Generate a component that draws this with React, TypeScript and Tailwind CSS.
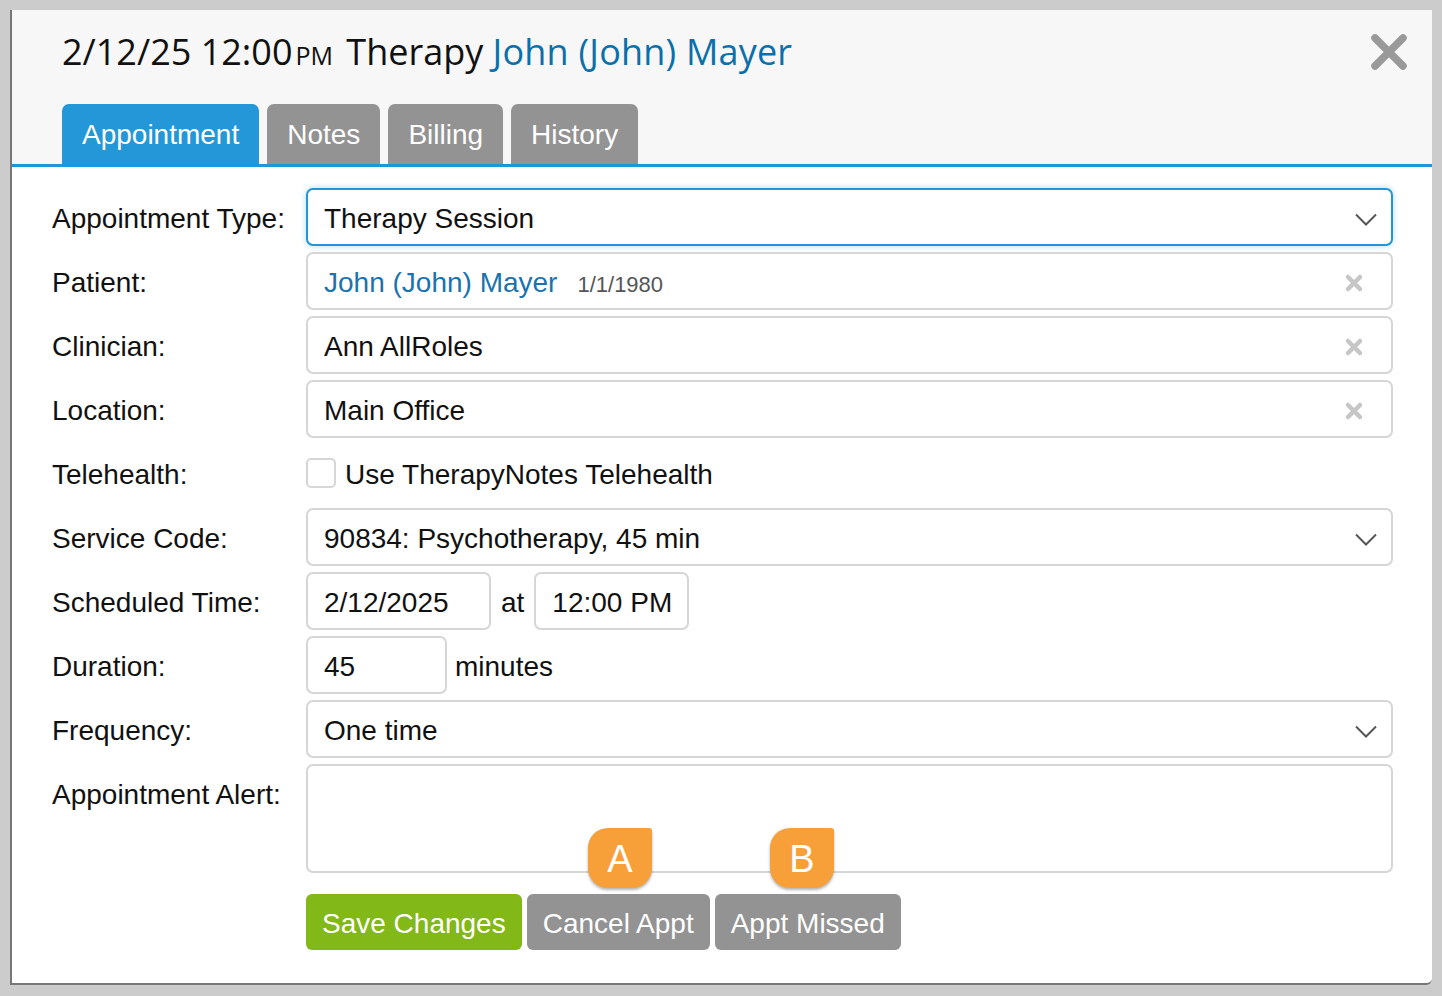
import React from 'react';

const ClearIcon = () => (
  <svg width="20" height="20" viewBox="0 0 20 20" className="shrink-0">
    <path
      d="M4 4L16 16M16 4L4 16"
      stroke="#c6c6c6"
      strokeWidth="4.5"
      strokeLinecap="round"
    />
  </svg>
);

const Chevron = () => (
  <svg width="22" height="13" viewBox="0 0 22 13" className="shrink-0">
    <path d="M1 1.5l10 10 10-10" fill="none" stroke="#555" strokeWidth="2" />
  </svg>
);

const Label = ({ children }: { children: React.ReactNode }) => (
  <div className="w-[254px] shrink-0 pt-[4px] text-[28px] text-[#111]">{children}</div>
);

const Row = ({ label, children }: { label: string; children: React.ReactNode }) => (
  <div className="flex items-center h-[58px]">
    <Label>{label}</Label>
    <div className="flex-1 flex items-center h-full">{children}</div>
  </div>
);

const Box = ({
  children,
  focused,
  className = '',
}: {
  children: React.ReactNode;
  focused?: boolean;
  className?: string;
}) => (
  <div
    className={`h-full flex items-center pl-4 pr-[14px] pt-[4px] rounded-[7px] border-2 bg-white text-[28px] text-[#111] ${
      focused
        ? 'border-[#2196d6] shadow-[0_0_6px_rgba(33,150,214,0.35)]'
        : 'border-[#d6d6d6]'
    } ${className}`}
  >
    {children}
  </div>
);

const Badge = ({ letter, className }: { letter: string; className: string }) => (
  <div
    className={`absolute w-[64px] h-[60px] rounded-[20px] rounded-tr-[3px] bg-[#f7a03a] shadow-[0_2px_3px_rgba(0,0,0,0.3)] flex items-center justify-center pt-[3px] text-white text-[38px] ${className}`}
  >
    {letter}
  </div>
);

const App = () => {
  const tabs = ['Appointment', 'Notes', 'Billing', 'History'];

  return (
    <div className="h-screen bg-[#cccccc] pt-[10px] pl-[10px] pr-[10px] font-['Liberation_Sans',Arial,sans-serif]">
      <div className="h-[975px] bg-white border-l-2 border-b-2 border-[#777] rounded-br-[6px] flex flex-col">
        <div className="relative h-[157px] shrink-0 bg-[#f7f7f7] border-b-[3px] border-[#2196d6] pl-[50px] pt-[24px] flex flex-col">
          <div className="font-['Open_Sans',sans-serif] text-[36px] leading-none text-[#111] whitespace-nowrap">
            2/12/25 12:00
            <span className="text-[25px] ml-[3px] mr-[4px]">PM</span> Therapy{' '}
            <span className="text-[#0b6fa9] tracking-[0.2px]">John (John) Mayer</span>
          </div>
          <div className="mt-auto flex gap-2">
            {tabs.map((tab, i) => (
              <div
                key={tab}
                className={`h-[60px] px-5 pt-[2px] rounded-t-[7px] flex items-center text-[28px] text-white ${
                  i === 0 ? 'bg-[#2397d8]' : 'bg-[#939393]'
                }`}
              >
                {tab}
              </div>
            ))}
          </div>
          <svg
            width="36"
            height="36"
            viewBox="0 0 36 36"
            className="absolute right-[25px] top-[24px]"
          >
            <path
              d="M4 4L32 32M32 4L4 32"
              stroke="#999"
              strokeWidth="7.5"
              strokeLinecap="round"
            />
          </svg>
        </div>

        <div className="pt-[21px] pl-[40px] pr-[39px] flex flex-col gap-[6px]">
          <Row label="Appointment Type:">
            <Box focused className="flex-1 justify-between">
              <span>Therapy Session</span>
              <Chevron />
            </Box>
          </Row>
          <Row label="Patient:">
            <Box className="flex-1 justify-between">
              <span className="flex items-baseline">
                <span className="text-[#1a73ae]">John (John) Mayer</span>
                <span className="ml-5 text-[22px] text-[#555]">1/1/1980</span>
              </span>
              <span className="mr-[13px]">
                <ClearIcon />
              </span>
            </Box>
          </Row>
          <Row label="Clinician:">
            <Box className="flex-1 justify-between">
              <span>Ann AllRoles</span>
              <span className="mr-[13px]">
                <ClearIcon />
              </span>
            </Box>
          </Row>
          <Row label="Location:">
            <Box className="flex-1 justify-between">
              <span>Main Office</span>
              <span className="mr-[13px]">
                <ClearIcon />
              </span>
            </Box>
          </Row>
          <Row label="Telehealth:">
            <div className="w-[30px] h-[30px] rounded-[5px] border-2 border-[#d6d6d6] bg-white" />
            <span className="ml-[9px] pt-[4px] text-[28px] text-[#111]">
              Use TherapyNotes Telehealth
            </span>
          </Row>
          <Row label="Service Code:">
            <Box className="flex-1 justify-between">
              <span>90834: Psychotherapy, 45 min</span>
              <Chevron />
            </Box>
          </Row>
          <Row label="Scheduled Time:">
            <Box className="w-[185px]">2/12/2025</Box>
            <span className="mx-[10px] pt-[4px] text-[28px] text-[#111]">at</span>
            <Box className="w-[155px]">12:00 PM</Box>
          </Row>
          <Row label="Duration:">
            <Box className="w-[141px]">45</Box>
            <span className="ml-2 pt-[4px] text-[28px] text-[#111]">minutes</span>
          </Row>
          <Row label="Frequency:">
            <Box className="flex-1 justify-between">
              <span>One time</span>
              <Chevron />
            </Box>
          </Row>
          <div className="flex items-start">
            <div className="h-[58px] flex items-center">
              <Label>Appointment Alert:</Label>
            </div>
            <div className="flex-1 h-[109px] rounded-[7px] border-2 border-[#d6d6d6] bg-white" />
          </div>
          <div className="flex mt-[15px]">
            <div className="w-[254px] shrink-0" />
            <div className="relative flex gap-[5px]">
              <div className="h-[56px] px-4 pt-[3px] rounded-[6px] bg-[#82b817] text-white text-[28px] flex items-center">
                Save Changes
              </div>
              <div className="h-[56px] px-4 pt-[3px] rounded-[6px] bg-[#939393] text-white text-[28px] flex items-center">
                Cancel Appt
              </div>
              <div className="h-[56px] px-4 pt-[3px] rounded-[6px] bg-[#939393] text-white text-[28px] flex items-center">
                Appt Missed
              </div>
              <Badge letter="A" className="left-[282px] top-[-66px]" />
              <Badge letter="B" className="left-[464px] top-[-66px]" />
            </div>
          </div>
        </div>
      </div>
    </div>
  );
};

export default App;
